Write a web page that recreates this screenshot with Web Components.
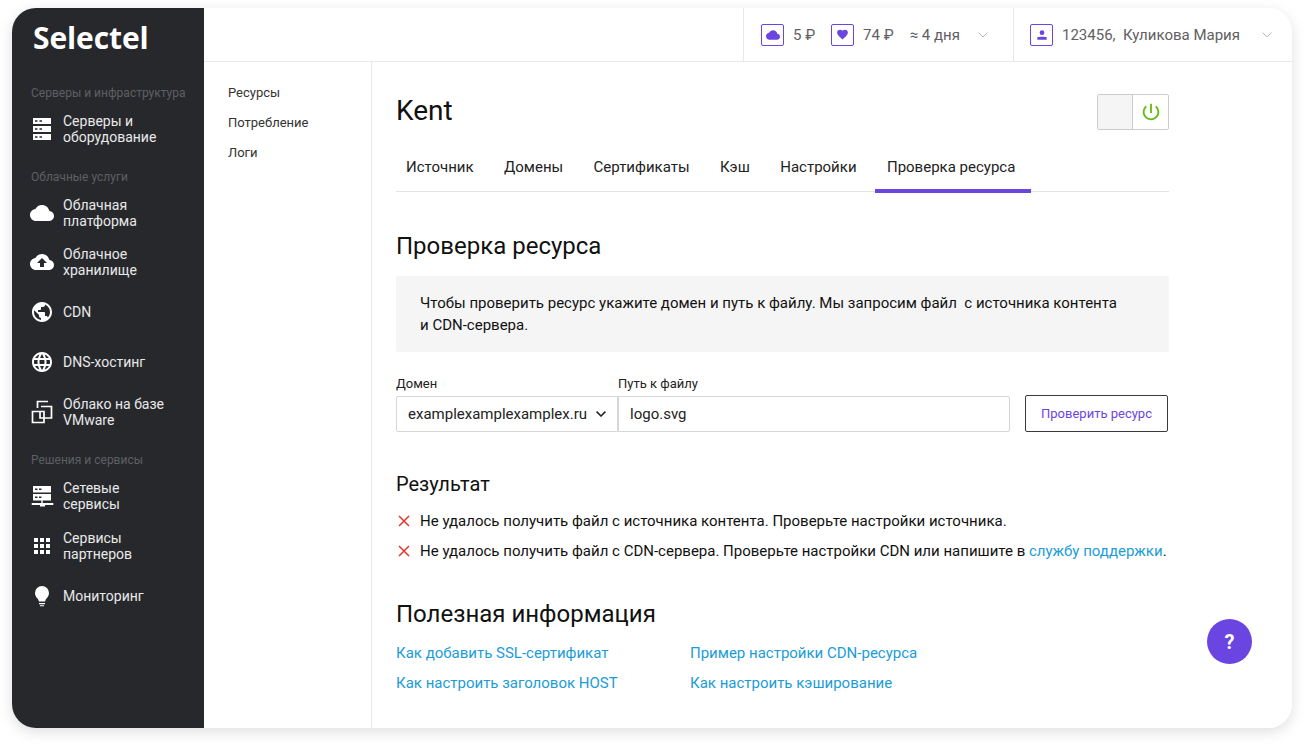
<!DOCTYPE html>
<html lang="ru">
<head>
<meta charset="utf-8">
<title>Selectel CDN</title>
<style>
  html, body { margin: 0; padding: 0; background: #fff; }
  body { font-family: Roboto, "Liberation Sans", sans-serif; color: #111; }
</style>
</head>
<body>
<sel-app>
  <sel-sidebar slot="sidebar">
    <sel-nav-label>Серверы и инфраструктура</sel-nav-label>
    <sel-nav-item icon="servers" style="margin-bottom:25px">Серверы и<br>оборудование</sel-nav-item>
    <sel-nav-label>Облачные услуги</sel-nav-label>
    <sel-nav-group>
      <sel-nav-item icon="cloud" style="margin-bottom:-1px">Облачная<br>платформа</sel-nav-item>
      <sel-nav-item icon="upload">Облачное<br>хранилище</sel-nav-item>
      <sel-nav-item icon="public">CDN</sel-nav-item>
      <sel-nav-item icon="language">DNS-хостинг</sel-nav-item>
      <sel-nav-item icon="vmware">Облако на базе<br>VMware</sel-nav-item>
    </sel-nav-group>
    <sel-nav-label>Решения и сервисы</sel-nav-label>
    <sel-nav-group>
      <sel-nav-item icon="network">Сетевые<br>сервисы</sel-nav-item>
      <sel-nav-item icon="apps">Сервисы<br>партнеров</sel-nav-item>
      <sel-nav-item icon="bulb">Мониторинг</sel-nav-item>
    </sel-nav-group>
  </sel-sidebar>

  <sel-topbar slot="topbar"></sel-topbar>

  <sel-subnav slot="subnav">
    <span>Ресурсы</span>
    <span>Потребление</span>
    <span>Логи</span>
  </sel-subnav>

  <sel-resource-head title="Kent"></sel-resource-head>
  <sel-tabs active="Проверка ресурса" items="Источник,Домены,Сертификаты,Кэш,Настройки,Проверка ресурса"></sel-tabs>
  <sel-check-form></sel-check-form>
  <sel-result></sel-result>
  <sel-useful></sel-useful>

  <sel-help slot="overlay"></sel-help>
</sel-app>

<script>
/* global HTMLElement:false */

const purple = '#6b45e1'
const link = '#1b9cd8'

const icons = Object.freeze({
  servers: '<path fill-rule="evenodd" d="M3 1h18v6H3zM3 9h18v6H3zM3 17h18v6H3zM5 3.200v1.600h2.500V3.200zM9.500 3.200v1.600H12V3.200zM5 11.200v1.600h2.500v-1.600zM9.500 11.200v1.600H12v-1.600zM5 19.200v1.600h2.500v-1.600zM9.500 19.200v1.600H12v-1.600z"/>',
  cloud: '<path d="M19.35 10.04C18.67 6.59 15.64 4 12 4 9.11 4 6.6 5.64 5.35 8.04 2.34 8.36 0 10.91 0 14c0 3.31 2.69 6 6 6h13c2.76 0 5-2.24 5-5 0-2.64-2.05-4.78-4.65-4.96z"/>',
  upload: '<path fill-rule="evenodd" d="M19.35 10.04C18.67 6.59 15.64 4 12 4 9.11 4 6.6 5.64 5.35 8.04 2.34 8.36 0 10.91 0 14c0 3.31 2.69 6 6 6h13c2.76 0 5-2.24 5-5 0-2.64-2.05-4.78-4.65-4.96zM14 13v4h-4v-4H7l5-5 5 5h-3z"/>',
  public: '<path fill-rule="evenodd" d="M12 2C6.48 2 2 6.48 2 12s4.48 10 10 10 10-4.48 10-10S17.52 2 12 2zm-1 17.93c-3.95-.49-7-3.85-7-7.93 0-.62.08-1.21.21-1.79L9 15v1c0 1.1.9 2 2 2v1.93zm6.9-2.54c-.26-.81-1-1.39-1.9-1.39h-1v-3c0-.55-.45-1-1-1H8v-2h2c.55 0 1-.45 1-1V7h2c1.1 0 2-.9 2-2v-.41c2.93 1.19 5 4.06 5 7.41 0 2.08-.8 3.97-2.1 5.39z"/>',
  language: '<path d="M11.99 2C6.47 2 2 6.48 2 12s4.47 10 9.99 10C17.52 22 22 17.52 22 12S17.52 2 11.99 2zm6.93 6h-2.95c-.32-1.25-.78-2.45-1.38-3.56 1.84.63 3.37 1.91 4.33 3.56zM12 4.04c.83 1.2 1.48 2.53 1.91 3.96h-3.82c.43-1.43 1.08-2.76 1.91-3.96zM4.26 14C4.1 13.36 4 12.69 4 12s.1-1.36.26-2h3.38c-.08.66-.14 1.32-.14 2 0 .68.06 1.34.14 2H4.26zm.82 2h2.95c.32 1.25.78 2.45 1.38 3.56-1.84-.63-3.37-1.9-4.33-3.56zm2.95-8H5.08c.96-1.66 2.49-2.93 4.33-3.56C8.81 5.55 8.35 6.75 8.03 8zM12 19.96c-.83-1.2-1.48-2.53-1.91-3.96h3.82c-.43 1.43-1.08 2.76-1.91 3.96zM14.34 14H9.66c-.09-.66-.16-1.32-.16-2 0-.68.07-1.35.16-2h4.68c.09.65.16 1.32.16 2 0 .68-.07 1.34-.16 2zm.25 5.56c.6-1.11 1.06-2.31 1.38-3.56h2.95c-.96 1.65-2.49 2.93-4.33 3.56zM16.36 14c.08-.66.14-1.32.14-2 0-.68-.06-1.34-.14-2h3.38c.16.64.26 1.31.26 2s-.1 1.36-.26 2h-3.38z"/>',
  vmware: '<path fill="none" stroke="currentColor" stroke-width="1.700" d="M7.500 8V1.500H18M11 6.500h10.500V18H14M2.500 11.500h11.500v11H2.500zM10 11.500V18h4"/>',
  network: '<path fill-rule="evenodd" d="M3 2h18v6.500H3zM3 10h18v6.500H3zM5 4.500v1.600h2.500V4.500zM9 4.500v1.600h2.500V4.500zM5 12.500v1.600h2.500v-1.600zM9 12.500v1.600h2.500v-1.600zM11.300 16.500h1.400V19H23.300v2H15v1.500h-5V21H1.700v-2h9.600z"/>',
  apps: '<path d="M4 4h4v4H4zM10 4h4v4h-4zM16 4h4v4h-4zM4 10h4v4H4zM10 10h4v4h-4zM16 10h4v4h-4zM4 16h4v4H4zM10 16h4v4h-4zM16 16h4v4h-4z"/>',
  bulb: '<path d="M12 2a7 7 0 0 0-7 7c0 2.800 1.600 4.700 3 6l1 2.500h6l1-2.500c1.400-1.300 3-3.200 3-6a7 7 0 0 0-7-7zM9 19h6v1.200H9zM10 21.200h4v1h-4z"/>'
})

function svg (body, size = 24) {
  return `<svg width="${size}" height="${size}" viewBox="0 0 24 24" fill="currentColor" aria-hidden="true">${body}</svg>`
}

class Base extends HTMLElement {
  constructor () {
    super()
    this.attachShadow({ mode: 'open' })
    this.shadowRoot.innerHTML = this.render()
  }

  render () { return '<slot></slot>' }
}

class SelApp extends Base {
  render () {
    return `<style>
      :host { display: block; box-sizing: border-box; width: 1304px; height: 744px; padding: 8px 12px 16px; overflow: hidden; }
      .window { position: relative; height: 720px; display: grid; grid-template-columns: 192px 168px 1fr; grid-template-rows: 54px 1fr;
        border-radius: 24px; overflow: hidden; background: #fff; }
      .frame { border-radius: 24px; box-shadow: 0 4px 14px rgba(0,0,0,.13); }
      .side { grid-row: 1 / 3; min-height: 0; }
      .top { grid-column: 2 / 4; }
      .main { padding: 32px 123px 0 24px; min-width: 0; }
    </style>
    <div class="frame"><div class="window">
      <div class="side"><slot name="sidebar"></slot></div>
      <div class="top"><slot name="topbar"></slot></div>
      <div><slot name="subnav"></slot></div>
      <div class="main"><slot></slot></div>
      <slot name="overlay"></slot>
    </div></div>`
  }
}

class SelSidebar extends Base {
  render () {
    return `<style>
      :host { display: block; height: 100%; background: #27282c; color: #fff; box-sizing: border-box; padding: 12px 0 0 19px; }
      .logo { font: 700 30px/36px "Open Sans", sans-serif; letter-spacing: -.1px; color: #fff; margin: 0 0 30px 2px; }
    </style>
    <div class="logo">Selectel</div>
    <slot></slot>`
  }
}

class SelNavLabel extends Base {
  render () {
    return `<style>
      :host { display: block; font: 12px/14px Roboto, sans-serif; color: #5e5f63; white-space: nowrap; margin-bottom: 13px; }
    </style><slot></slot>`
  }
}

class SelNavGroup extends Base {
  render () {
    return `<style>
      :host { display: flex; flex-direction: column; gap: 18px; margin: 0 0 25px; }
    </style><slot></slot>`
  }
}

class SelNavItem extends Base {
  connectedCallback () {
    this.shadowRoot.querySelector('.ic').innerHTML = svg(icons[this.getAttribute('icon')])
  }

  render () {
    return `<style>
      :host { display: flex; align-items: center; gap: 9px; min-height: 32px; margin-left: -1px; font: 14px/16px Roboto, sans-serif; color: #e8e8e9; }
      .ic { width: 24px; height: 24px; color: #fff; flex: none; }
      svg { display: block; }
    </style><span class="ic"></span><span><slot></slot></span>`
  }
}

class SelTopbar extends Base {
  render () {
    const cloud = svg(icons.cloud, 14)
    const heart = svg('<path d="M12 21.350l-1.450-1.320C5.400 15.360 2 12.280 2 8.500 2 5.420 4.420 3 7.500 3c1.740 0 3.410.81 4.500 2.090C13.090 3.810 14.760 3 16.500 3 19.580 3 22 5.420 22 8.500c0 3.780-3.400 6.860-8.550 11.540L12 21.350z"/>', 13)
    const user = svg('<circle cx="12" cy="8" r="4"/><path d="M4 16c2-1.500 14-1.500 16 0v4H4z"/>', 14)
    const chev = '<svg class="chev" width="10" height="6" viewBox="0 0 10 6" fill="none" stroke="#b9b9bb" stroke-width="1"><path d="M.5.500 5 5l4.500-4.500"/></svg>'
    return `<style>
      :host { display: flex; justify-content: flex-end; height: 54px; box-sizing: border-box; border-bottom: 1px solid #e8e8e8; font: 15px/20px Roboto, sans-serif; color: #5f6063; }
      section { display: flex; align-items: center; border-left: 1px solid #e8e8e8; box-sizing: border-box; }
      .bal { width: 270px; padding-left: 17px; }
      .usr { width: 279px; padding-left: 16px; }
      .box { width: 23px; height: 22px; border: 1.500px solid ${purple}; border-radius: 2px; color: ${purple}; display: flex; align-items: center; justify-content: center; box-sizing: border-box; }
      .t { margin-left: 9px; white-space: pre; }
      .chev { margin-left: auto; }
      .bal .chev { margin-right: 25px; }
      .usr .chev { margin-right: 20px; }
    </style>
    <section class="bal">
      <span class="box">${cloud}</span><span class="t">5 ₽</span>
      <span class="box" style="margin-left:16px">${heart}</span><span class="t">74 ₽</span>
      <span class="t" style="margin-left:16px">≈ 4 дня</span>${chev}
    </section>
    <section class="usr">
      <span class="box">${user}</span><span class="t">123456,  Куликова Мария</span>${chev}
    </section>`
  }
}

class SelSubnav extends Base {
  render () {
    return `<style>
      :host { display: flex; flex-direction: column; gap: 14px; height: 100%; box-sizing: border-box; padding: 23px 0 0 24px; border-right: 1px solid #e8e8e8; font: 13px/16px Roboto, sans-serif; color: #333; }
    </style><slot></slot>`
  }
}

class SelResourceHead extends Base {
  connectedCallback () {
    this.shadowRoot.querySelector('h1').textContent = this.getAttribute('title')
  }

  render () {
    return `<style>
      :host { display: flex; justify-content: space-between; align-items: flex-start; height: 36px; }
      h1 { margin: 0; font: 400 28px/34px Roboto, sans-serif; color: #111; }
      .pw { display: flex; width: 72px; height: 36px; box-sizing: border-box; border: 1px solid #ccc; border-radius: 2px; }
      .pw i { flex: 1; background: #f5f5f5; border-right: 1px solid #ccc; }
      .pw b { width: 35px; flex: none; display: flex; align-items: center; justify-content: center; color: #63bd0e; }
    </style>
    <h1></h1>
    <div class="pw"><i></i><b>${svg('<path d="M13 3h-2v10h2V3zm4.830 2.170l-1.420 1.420C17.990 7.860 19 9.810 19 12c0 3.870-3.130 7-7 7s-7-3.130-7-7c0-2.190 1.010-4.140 2.580-5.420L6.170 5.170C4.230 6.820 3 9.260 3 12c0 4.970 4.030 9 9 9s9-4.030 9-9c0-2.740-1.230-5.180-3.170-6.830z"/>', 22)}</b></div>`
  }
}

class SelTabs extends Base {
  connectedCallback () {
    const active = this.getAttribute('active')
    this.shadowRoot.querySelector('nav').innerHTML = this.getAttribute('items').split(',')
      .map(t => `<a class="${t === active ? 'on' : ''}">${t}</a>`).join('')
  }

  render () {
    return `<style>
      :host { display: block; margin-top: 18px; border-bottom: 1px solid #e4e4e4; height: 44px; box-sizing: border-box; }
      nav { display: flex; gap: 6.400px; margin-left: -2px; }
      a { display: block; height: 45px; box-sizing: border-box; padding: 9px 12px 0; font: 15px/20px Roboto, sans-serif; color: #222; border-bottom: 4px solid transparent; }
      a.on { border-bottom-color: ${purple}; padding-right: 16px; }
    </style><nav></nav>`
  }
}

class SelCheckForm extends Base {
  render () {
    return `<style>
      :host { display: block; margin-top: 39px; }
      h2 { margin: 0; font: 400 24px/30px Roboto, sans-serif; color: #111; }
      .info { margin-top: 15px; background: #f5f5f5; border-radius: 2px; padding: 15.500px 24px 0; height: 76px; box-sizing: border-box; font: 15px/22.500px Roboto, sans-serif; color: #111; white-space: pre; }
      .form { display: flex; align-items: flex-end; margin-top: 24px; }
      label { display: block; font: 13px/16px Roboto, sans-serif; color: #222; margin-bottom: 4px; }
      .f { height: 36px; box-sizing: border-box; border: 1px solid #d6d6d6; border-radius: 2px 0 0 2px; display: flex; align-items: center; font: 15px/20px Roboto, sans-serif; color: #222; }
      .sel { width: 222px; padding-left: 11px; white-space: nowrap; }
      .sel svg { margin-left: 9px; flex: none; }
      .inp { width: 392px; padding-left: 11px; border-radius: 0 2px 2px 0; }
      .btn { margin-left: 15px; width: 143px; height: 37px; box-sizing: border-box; border: 1px solid #3a3a3e; border-radius: 2px; background: #fff; color: ${purple}; font: 13px/20px Roboto, sans-serif; display: flex; align-items: center; justify-content: center; }
    </style>
    <h2>Проверка ресурса</h2>
    <div class="info">Чтобы проверить ресурс укажите домен и путь к файлу. Мы запросим файл  с источника контента
и CDN-сервера.</div>
    <div class="form">
      <div><label>Домен</label><div class="f sel">examplexamplexamplex.ru<svg width="10" height="6" viewBox="0 0 10 6" fill="none" stroke="#222" stroke-width="1.500"><path d="M.6.600 5 5l4.400-4.400"/></svg></div></div>
      <div><label>Путь к файлу</label><div class="f inp">logo.svg</div></div>
      <div class="btn">Проверить ресурс</div>
    </div>`
  }
}

class SelResult extends Base {
  render () {
    const x = '<svg width="12" height="12" viewBox="0 0 12 12" fill="none" stroke="#e8352b" stroke-width="1.500"><path d="M1 1l10 10M11 1L1 11"/></svg>'
    return `<style>
      :host { display: block; margin-top: 39px; font: 15px/20px Roboto, sans-serif; color: #111; }
      h3 { margin: 0 0 14px; font: 400 20px/26px Roboto, sans-serif; }
      div { display: flex; align-items: center; gap: 10px; height: 20px; margin-bottom: 10px; white-space: nowrap; }
      svg { margin-left: 2px; flex: none; }
      a { color: ${link}; }
    </style>
    <h3>Результат</h3>
    <div>${x}<span>Не удалось получить файл с источника контента. Проверьте настройки источника.</span></div>
    <div>${x}<span>Не удалось получить файл с CDN-сервера. Проверьте настройки CDN или напишите в <a>службу поддержки</a>.</span></div>`
  }
}

class SelUseful extends Base {
  render () {
    return `<style>
      :host { display: block; margin-top: 38px; }
      h2 { margin: 0 0 14px; font: 400 24px/30px Roboto, sans-serif; color: #111; }
      .links { display: grid; grid-template-columns: 294px 1fr; row-gap: 10px; font: 15px/20px Roboto, sans-serif; color: ${link}; }
    </style>
    <h2>Полезная информация</h2>
    <div class="links">
      <span>Как добавить SSL-сертификат</span><span>Пример настройки CDN-ресурса</span>
      <span>Как настроить заголовок HOST</span><span>Как настроить кэширование</span>
    </div>`
  }
}

class SelHelp extends Base {
  render () {
    return `<style>
      :host { position: absolute; left: 1195px; top: 611px; width: 45px; height: 45px; border-radius: 50%; background: ${purple}; color: #fff;
        display: flex; align-items: center; justify-content: center; font: 700 20px/24px Roboto, sans-serif; }
    </style>?`
  }
}

const defs = {
  'sel-app': SelApp,
  'sel-sidebar': SelSidebar,
  'sel-nav-label': SelNavLabel,
  'sel-nav-group': SelNavGroup,
  'sel-nav-item': SelNavItem,
  'sel-topbar': SelTopbar,
  'sel-subnav': SelSubnav,
  'sel-resource-head': SelResourceHead,
  'sel-tabs': SelTabs,
  'sel-check-form': SelCheckForm,
  'sel-result': SelResult,
  'sel-useful': SelUseful,
  'sel-help': SelHelp
}
Object.keys(defs).forEach(name => window.customElements.define(name, defs[name]))
</script>
</body>
</html>
